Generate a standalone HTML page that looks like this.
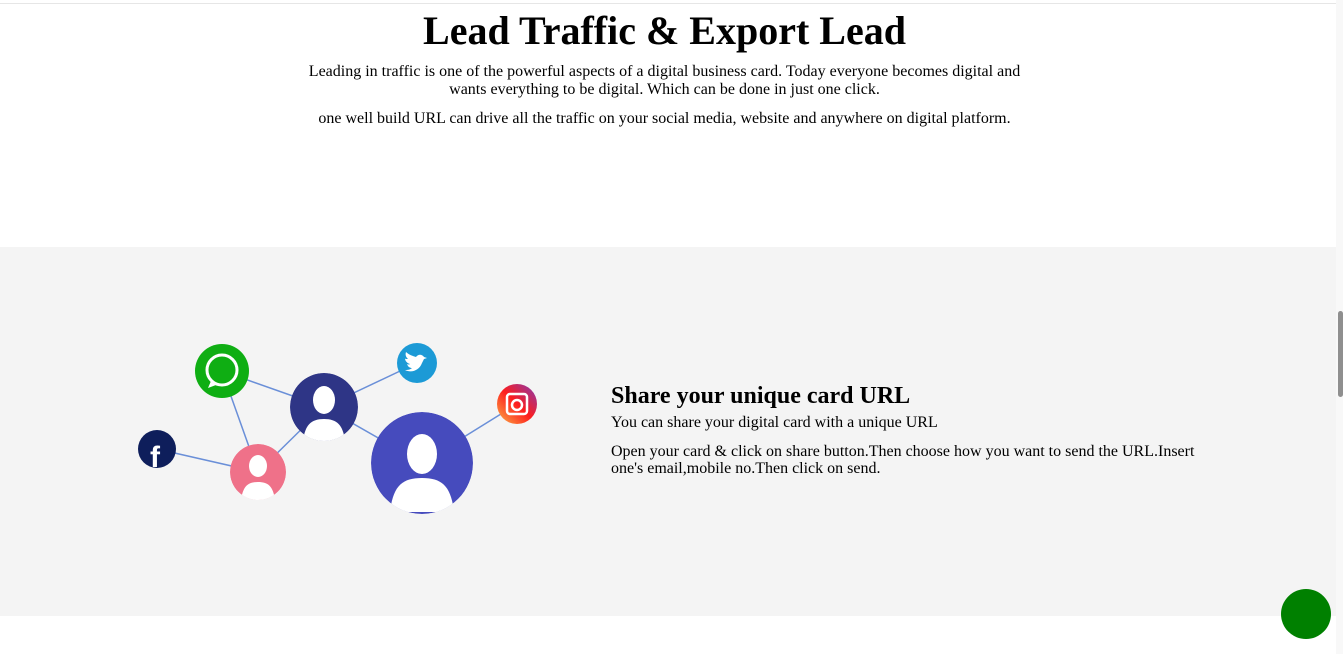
<!DOCTYPE html>
<html><head><style>
body{margin:0;width:1343px;height:654px;overflow:hidden;background:#fff;font-family:"Liberation Serif",serif;position:relative}
.top{position:absolute;left:0;top:3px;width:1336px;height:1px;background:#e6e6e6}
h1{position:absolute;top:9px;left:0;width:1329px;text-align:center;margin:0;font-size:40px;font-weight:bold;line-height:44px}
.p{position:absolute;left:300px;width:729px;text-align:center;font-size:16px;line-height:18px;margin:0}
.gray{position:absolute;left:0;top:247px;width:1336px;height:369px;background:#f4f4f4}
.sb{position:absolute;right:0;top:0;width:7px;height:654px;background:#f8f8f8}
.th{position:absolute;right:0;top:311px;width:5px;height:86px;background:#8f8f8f;border-radius:3px}
h2{position:absolute;left:611px;top:382px;margin:0;font-size:24px;line-height:28px}
.t{position:absolute;left:611px;font-size:16px;line-height:17px;width:600px;margin:0}
.btn{position:absolute;left:1281px;top:589px;width:50px;height:50px;border-radius:50%;background:#008000}
</style></head><body>
<div class="top"></div>
<h1>Lead Traffic &amp; Export Lead</h1>
<p class="p" style="top:63px">Leading in traffic is one of the powerful aspects of a digital business card. Today everyone becomes digital and wants everything to be digital. Which can be done in just one click.</p>
<p class="p" style="top:110px;left:270px;width:789px">one well build URL can drive all the traffic on your social media, website and anywhere on digital platform.</p>
<div class="gray"></div>
<svg style="position:absolute;left:0;top:0" width="1336" height="654">
<g stroke="#6a8fd8" stroke-width="1.5">
<line x1="222" y1="371" x2="324" y2="407"/><line x1="222" y1="371" x2="258" y2="472"/><line x1="157" y1="449" x2="258" y2="472"/><line x1="258" y1="472" x2="324" y2="407"/><line x1="324" y1="407" x2="417" y2="363"/><line x1="324" y1="407" x2="422" y2="463"/><line x1="422" y1="463" x2="517" y2="404"/>
</g>
<defs><linearGradient id="ig" x1="0" y1="1" x2="1" y2="0"><stop offset="0" stop-color="#fcb045"/><stop offset=".5" stop-color="#fd1d1d"/><stop offset="1" stop-color="#833ab4"/></linearGradient>
<clipPath id="c1"><circle cx="324" cy="407" r="34"/></clipPath><clipPath id="c2"><circle cx="258" cy="472" r="28"/></clipPath><clipPath id="c3"><circle cx="422" cy="463" r="51"/></clipPath></defs>
<circle cx="222" cy="371" r="27" fill="#0fae13"/>
<circle cx="222" cy="370" r="15" fill="none" stroke="#fff" stroke-width="3"/><path d="M211 381l-3 7 8-3z" fill="#fff"/>
<circle cx="417" cy="363" r="20" fill="#1c9ad6"/><path d="M405 370c6 3 14 1 17-7l2-4 3-1-3-1c-2-3-6-3-8 0-3-1-7-2-10-5-1 3 0 5 2 7-2 0-3 0-3-1 0 3 2 5 5 6-1 1-3 0-3 0 1 3 3 4 5 4-2 2-5 2-7 2z" fill="#fff"/>
<circle cx="517" cy="404" r="20" fill="url(#ig)"/><rect x="507" y="394" width="20" height="20" rx="3" fill="none" stroke="#fff" stroke-width="2.5"/><circle cx="517" cy="405" r="5" fill="none" stroke="#fff" stroke-width="2.5"/>
<circle cx="157" cy="449" r="19" fill="#0e1e5b"/><text x="150" y="467" font-family="Liberation Sans" font-weight="bold" font-size="30" fill="#fff">f</text>
<g clip-path="url(#c1)"><circle cx="324" cy="407" r="34" fill="#2e3586"/><ellipse cx="324" cy="400" rx="11" ry="14" fill="#fff"/><path d="M303 441c2-16 8-22 21-22s19 6 21 22z" fill="#fff"/></g>
<g clip-path="url(#c2)"><circle cx="258" cy="472" r="28" fill="#ef7189"/><ellipse cx="258" cy="466" rx="9" ry="11" fill="#fff"/><path d="M241 500c2-14 7-18 17-18s15 4 17 18z" fill="#fff"/></g>
<g clip-path="url(#c3)"><circle cx="422" cy="463" r="51" fill="#464bbd"/><ellipse cx="422" cy="454" rx="15" ry="20" fill="#fff"/><path d="M390 512c3-26 12-34 32-34s29 8 32 34z" fill="#fff"/></g>
</svg>
<h2>Share your unique card URL</h2>
<p class="t" style="top:414px">You can share your digital card with a unique URL</p>
<p class="t" style="top:443px">Open your card &amp; click on share button.Then choose how you want to send the URL.Insert one's email,mobile no.Then click on send.</p>
<div class="sb"><div class="th"></div></div>
<div class="btn"></div>
</body></html>
